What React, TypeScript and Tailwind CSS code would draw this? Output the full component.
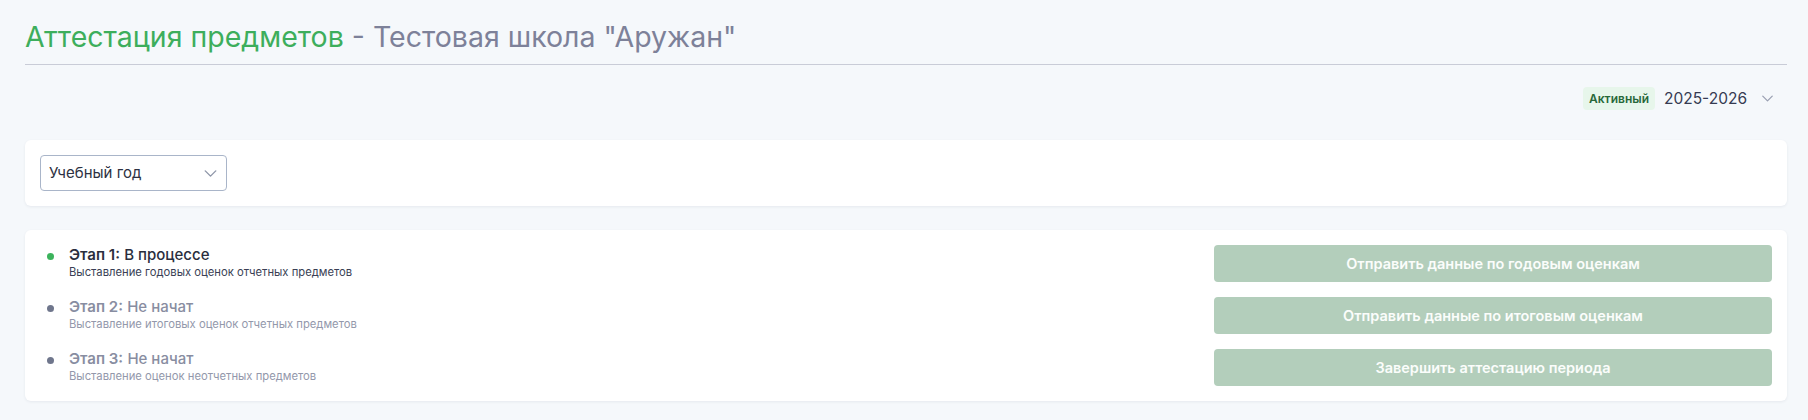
import { ReactNode } from "react";

type Stage = {
  num: number;
  status: string;
  desc: string;
  active: boolean;
  action: string;
};

const stages: Stage[] = [
  {
    num: 1,
    status: "В процессе",
    desc: "Выставление годовых оценок отчетных предметов",
    active: true,
    action: "Отправить данные по годовым оценкам",
  },
  {
    num: 2,
    status: "Не начат",
    desc: "Выставление итоговых оценок отчетных предметов",
    active: false,
    action: "Отправить данные по итоговым оценкам",
  },
  {
    num: 3,
    status: "Не начат",
    desc: "Выставление оценок неотчетных предметов",
    active: false,
    action: "Завершить аттестацию периода",
  },
];

function Chevron({ className }: { className?: string }) {
  return (
    <svg viewBox="0 0 14 8" fill="none" className={className}>
      <path d="M1 1l6 6 6-6" stroke="currentColor" strokeWidth="1.6" strokeLinecap="round" strokeLinejoin="round" />
    </svg>
  );
}

function Card({ children, className = "" }: { children: ReactNode; className?: string }) {
  return (
    <div className={"bg-white rounded-[6px] shadow-[0_1px_3px_rgba(30,40,70,0.07)] " + className}>
      {children}
    </div>
  );
}

export default function App() {
  return (
    <div className="min-h-screen bg-[#f5f8fb] pl-[25px] pr-[21px] pt-[20px] font-['Inter','Noto_Sans',sans-serif]">
      {/* header */}
      <div className="border-b-[1.5px] border-[#c9ccd7] pb-[10px]">
        <h1 className="text-[28.5px] leading-[34px] font-normal">
          <span className="text-[#3dae5c]">Аттестация предметов</span>
          <span className="text-[#7d8199]"> - Тестовая школа "Аружан"</span>
        </h1>
      </div>

      <div className="flex justify-end items-center mt-[22px] pr-[14px]">
        <span className="h-[23px] px-[6px] flex items-center rounded-[4px] bg-[#e7f6eb] text-[#28683a] text-[12px] font-semibold">
          Активный
        </span>
        <span className="ml-[9px] text-[15.5px] text-[#363b52]">2025-2026</span>
        <Chevron className="ml-[15px] w-[11px] h-[7px] text-[#9aa0b2]" />
      </div>

      {/* filter */}
      <Card className="mt-[30px] p-[15px]">
        <button className="w-[187px] h-[36px] border border-[#a9b5c9] rounded-[4px] flex items-center justify-between pl-[8px] pr-[9px] text-[15px] text-[#2d3142]">
          <span>Учебный год</span>
          <Chevron className="w-[13px] h-[7px] text-[#8e96a8]" />
        </button>
      </Card>

      {/* stages */}
      <Card className="mt-[24px] pl-[22px] pr-[15px] py-[15px] flex flex-col gap-[15px]">
        {stages.map((s) => (
          <div key={s.num} className="flex items-center justify-between">
            <div className="flex items-start">
              <span
                className={
                  "mt-[5px] w-[7px] h-[7px] rounded-full " + (s.active ? "bg-[#3cb35c]" : "bg-[#6f768c]")
                }
              />
              <div className="ml-[15px] -mt-[2px]">
                <div className={"text-[15px] leading-[18px] " + (s.active ? "text-[#2a2e3d]" : "text-[#888da1]")}>
                  <span className="font-semibold">Этап {s.num}:</span>{" "}
                  <span className="font-medium">{s.status}</span>
                </div>
                <div className={"text-[11.25px] leading-[15px] mt-[1px] " + (s.active ? "text-[#3a3f55]" : "text-[#9398ab]")}>
                  {s.desc}
                </div>
              </div>
            </div>
            <button className="w-[558px] h-[37px] rounded-[4px] bg-[#b3cebb] text-[#fbfdfb] text-[14.5px] font-semibold">
              {s.action}
            </button>
          </div>
        ))}
      </Card>
    </div>
  );
}
